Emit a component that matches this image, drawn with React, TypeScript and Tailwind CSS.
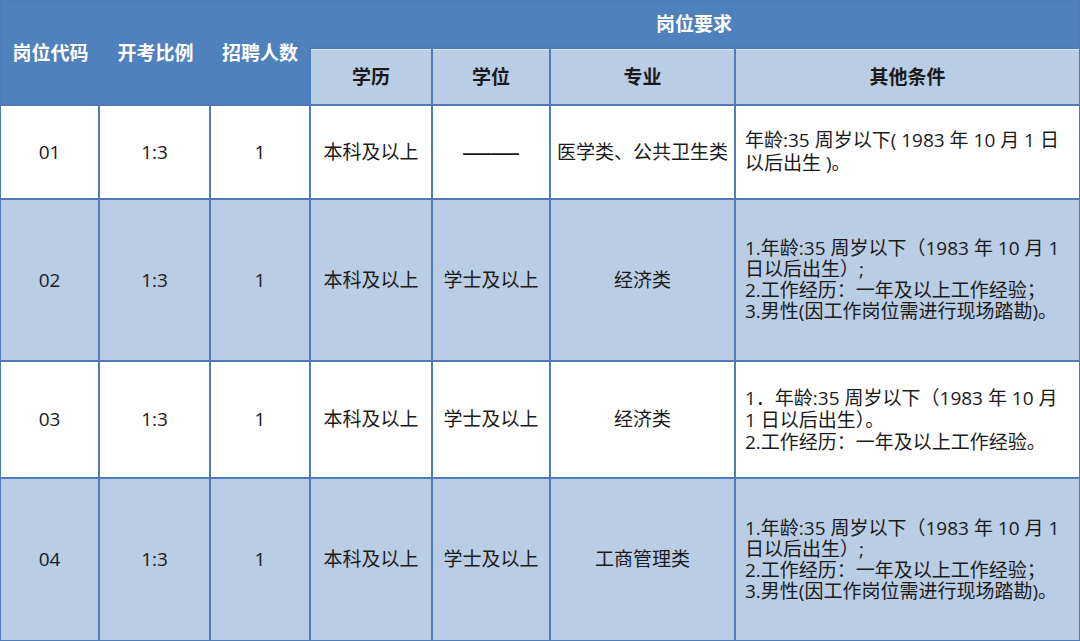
const font = '"Open Sans", "Noto Sans CJK SC", sans-serif';

type Row = {
  code: string;
  ratio: string;
  count: string;
  edu: string;
  degree: string;
  major: string;
  other: string[];
  shaded: boolean;
  leading: string;
};

const rows: Row[] = [
  {
    code: "01",
    ratio: "1:3",
    count: "1",
    edu: "本科及以上",
    degree: "——",
    major: "医学类、公共卫生类",
    other: ["年龄:35 周岁以下( 1983 年 10 月 1 日", "以后出生 )。"],
    shaded: false,
    leading: "leading-[23px]",
  },
  {
    code: "02",
    ratio: "1:3",
    count: "1",
    edu: "本科及以上",
    degree: "学士及以上",
    major: "经济类",
    other: [
      "1.年龄:35 周岁以下（1983 年 10 月 1",
      "日以后出生）;",
      "2.工作经历：一年及以上工作经验；",
      "3.男性(因工作岗位需进行现场踏勘)。",
    ],
    shaded: true,
    leading: "leading-[21px]",
  },
  {
    code: "03",
    ratio: "1:3",
    count: "1",
    edu: "本科及以上",
    degree: "学士及以上",
    major: "经济类",
    other: [
      "1．年龄:35 周岁以下（1983 年 10 月",
      "1 日以后出生）。",
      "2.工作经历：一年及以上工作经验。",
    ],
    shaded: false,
    leading: "leading-[22px]",
  },
  {
    code: "04",
    ratio: "1:3",
    count: "1",
    edu: "本科及以上",
    degree: "学士及以上",
    major: "工商管理类",
    other: [
      "1.年龄:35 周岁以下（1983 年 10 月 1",
      "日以后出生）;",
      "2.工作经历：一年及以上工作经验；",
      "3.男性(因工作岗位需进行现场踏勘)。",
    ],
    shaded: true,
    leading: "leading-[21px]",
  },
];

function Cell({ shaded, children }: { shaded: boolean; children: React.ReactNode }) {
  return (
    <div
      className={`flex items-center justify-center whitespace-nowrap text-[19px] text-[#1a1a1a] ${
        shaded ? "bg-[#b9cde5]" : "bg-white"
      }`}
    >
      {children}
    </div>
  );
}

export default function App() {
  return (
    <div
      className="w-[1080px] h-[641px] bg-[#4d7cb8] p-[1px] grid gap-[2px] grid-cols-[97px_109px_98px_120px_116px_183px_1fr] grid-rows-[46px_55px_92px_160px_115px_1fr]"
      style={{ fontFamily: font }}
    >
      {/* left header block */}
      <div className="col-span-3 row-span-2 bg-[#4f81bd] grid grid-cols-[99px_111px_1fr] items-center pt-[2px] text-white font-bold text-[19px]">
        <div className="text-center">岗位代码</div>
        <div className="text-center">开考比例</div>
        <div className="text-center">招聘人数</div>
      </div>
      <div className="col-span-4 ml-[-2px] bg-[#4f81bd] flex items-center justify-center text-white font-bold text-[19px]">
        岗位要求
      </div>
      {["学历", "学位", "专业", "其他条件"].map((h) => (
        <div
          key={h}
          className="bg-[#b9cde5] border-t border-[#dbe6f3] flex items-center justify-center font-bold text-[19px] text-[#1a1a1a]"
        >
          {h}
        </div>
      ))}

      {rows.map((r) => (
        <div key={r.code} className="contents">
          <Cell shaded={r.shaded}>{r.code}</Cell>
          <Cell shaded={r.shaded}>{r.ratio}</Cell>
          <Cell shaded={r.shaded}>{r.count}</Cell>
          <Cell shaded={r.shaded}>{r.edu}</Cell>
          <Cell shaded={r.shaded}>
            {r.degree === "——" ? (
              <span className="text-[28px] leading-none" style={{ fontFamily: '"Liberation Sans", sans-serif' }}>
                ——
              </span>
            ) : (
              r.degree
            )}
          </Cell>
          <Cell shaded={r.shaded}>{r.major}</Cell>
          <div
            className={`flex flex-col justify-center pl-[9px] text-[19px] text-[#1a1a1a] ${r.leading} ${
              r.shaded ? "bg-[#b9cde5]" : "bg-white"
            }`}
          >
            {r.other.map((line) => (
              <div key={line} className="whitespace-nowrap">
                {line}
              </div>
            ))}
          </div>
        </div>
      ))}
    </div>
  );
}
